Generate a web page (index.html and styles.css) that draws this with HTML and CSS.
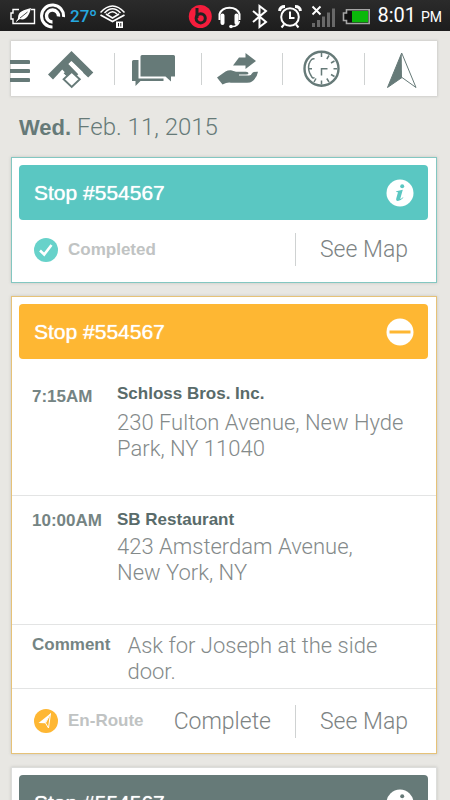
FILE: index.html
```html
<!DOCTYPE html>
<html lang="en">
<head>
<meta charset="utf-8">
<meta name="viewport" content="width=device-width, initial-scale=1">
<title>Stops</title>
<link rel="stylesheet" href="styles.css">
</head>
<body>
<div class="app">
  <div class="status">
    <svg width="26" height="30" viewBox="10 0 26 30" fill="none" stroke="#fff" stroke-width="1.4"><path d="M19 8.500H13V12H11V18H13V22.500H34.500V8.500H31"/><path d="M18 17C18 10 24 9 31 7C29 15 26 20 19.500 18L28 11L17 20Z" fill="#fff" stroke="none"/><path d="M16 20.500L26 12.500" stroke="#fff" stroke-width="1"/><path d="M20 17L27.500 11" stroke="#222" stroke-width=".8"/></svg>
    <svg width="26" height="30" viewBox="40 0 26 30" fill="none" stroke="#fff"><path d="M52.500 26A11 11 0 1 1 63.500 16" stroke-width="3"/><path d="M52.500 21A6 6 0 1 1 58.500 15.500" stroke-width="3.400"/></svg>
    <span class="temp">27º</span>
    <svg width="26" height="30" viewBox="100 0 26 30" fill="none" stroke="#fff" stroke-width="1.500"><path d="M100.500 11.500Q112.500-1.500 124.500 11.500M104.500 12Q112.500 3.500 120.500 12M108 13Q112.500 8.500 117 13"/><path d="M100.500 14L112.500 20.500L124.500 14M106 13L112.500 17L119 13" stroke-width="1.800"/><path d="M116 20.500H123V27H116Z" fill="#fff" stroke="none"/><path d="M118.500 22V25.500M120.800 22V25.500" stroke="#222" stroke-width="1"/></svg>
    <span class="spacer"></span>
    <svg width="26" height="30" viewBox="190 0 26 30"><circle cx="203.300" cy="15.500" r="11.500" fill="#f51d3c"/><path d="M200 7V17" stroke="#222" stroke-width="3"/><circle cx="203.700" cy="17.300" r="4.600" fill="none" stroke="#222" stroke-width="3"/></svg>
    <svg width="26" height="30" viewBox="220 0 26 30" fill="none" stroke="#fff"><path d="M222.500 19V13A10.500 9 0 0 1 242.500 13V19" stroke-width="2"/><path d="M225.500 14.500V22M239.500 14.500V22" stroke-width="4" stroke-linecap="round"/><path d="M242.500 20Q241 26 234 25.500" stroke-width="1.500"/><circle cx="234" cy="25.500" r="1.800" fill="#fff" stroke="none"/></svg>
    <svg width="26" height="30" viewBox="250 0 26 30" fill="none" stroke="#fff" stroke-width="2"><path d="M256 10L269 21L262.500 26V5L269 10L256 21"/></svg>
    <svg width="28" height="30" viewBox="280 0 28 30" fill="none" stroke="#fff" stroke-width="2"><circle cx="293" cy="16" r="8.800"/><path d="M293 10.500V17H297.500M287 23.500L284.500 26.500M299 23.500L301.500 26.500"/><path d="M282.500 10Q283 5.500 288 5.500M298 5.500Q303 5.500 303.500 10" stroke-width="3"/></svg>
    <svg width="28" height="30" viewBox="312 0 28 30"><path d="M315 22h3v4h-3zM320 19h3v7h-3zM325 15.500h3V26h-3zM330 11.500h3V26h-3zM335 7.500h3V26h-3z" fill="#686868"/><path d="M315.500 5.500L323.500 13.500M323.500 5.500L315.500 13.500" stroke="#fff" stroke-width="1.900"/></svg>
    <svg width="30" height="30" viewBox="343 0 30 30"><path d="M348.500 8.800H371.200V22.500H348.500V19.500H345.500V12H348.500Z" fill="#111" stroke="#a5a5a5" stroke-width="1.600"/><path d="M354 10H370V21.300H354Z" fill="#0ab80a"/></svg>
    <span class="time">8:01 <small>PM</small></span>
  </div>

  <nav class="toolbar" aria-label="Main">
    <div class="cell cell-home">
      <button class="menu" aria-label="Menu"><svg width="20" height="40" viewBox="10 48 20 40" fill="#667a78"><path d="M10 59H28.500a1.500 1.500 0 0 1 0 4H10ZM10 68H28.500a1.500 1.500 0 0 1 0 4H10ZM10 77H28.500a1.500 1.500 0 0 1 0 4H10Z"/></svg></button>
      <button aria-label="Home"><svg width="46" height="40" viewBox="48 48 46 40"><path d="M71.500 50L93.300 71.500L88.200 76.500L71 60.500L68.500 63L78.500 73L71.700 80L61 70L53 78.500L48 73.500Z" fill="#667a78"/><path d="M60.500 70.500L63.300 72.500L64.800 71.200L62.200 68.500ZM71.500 60L68.500 63L80 75L83.300 71.500Z" fill="#fff"/><path d="M58 73.500L61.200 70.300L66.500 75.500L63.500 79.500Z" fill="#fff"/><path d="M71.700 70.700L79.800 78.300L71.700 86L63.600 78.300Z" fill="#fff" stroke="#667a78" stroke-width="1.900"/></svg></button>
    </div>
    <button class="cell cell-chat" aria-label="Messages"><svg width="51" height="40" viewBox="132 48 51 40" fill="#667a78"><path d="M142 54H173.500Q175 54 175 55.500V75.500H171V80.500L165.500 75.500H140.500V55.500Q140.500 54 142 54Z"/><path d="M133.500 59H138.500V77.500H163.500V80H140.500L135.500 85V80H132V60.500Q132 59 133.500 59Z"/></svg></button>
    <button class="cell cell-send" aria-label="Deliveries"><svg width="49" height="40" viewBox="217 48 49 40" fill="#667a78"><path d="M239 56.500H245.500V52L256 60L245.500 68V64.500H233Z"/><path d="M217 76.500L225.500 70.500Q228 69 231 69.200L236 70.700H246Q248.500 70.700 248.500 72.300Q248.500 73.500 246 73.500H239V74.500H249Q251 74.500 252.500 71.700Q253.500 70.500 258 70.700Q257 77 252 80.500Q250.500 81.800 247 81.800H231Q227.500 81 222.500 83.500Z"/></svg></button>
    <button class="cell cell-clock" aria-label="Schedule"><svg width="41" height="40" viewBox="303 48 41 40" fill="none" stroke="#667a78"><circle cx="321.500" cy="67.700" r="17" stroke-width="2.400"/><path d="M321.500 52V56M321.500 79.500V83.500M333.500 67.700H337M308.500 67.700H312M329 54.500L326.800 58M334.500 60L331 62M334.500 75.500L331 73.500M329 81L326.800 77.500M314 81L316 77.500M321.500 74.500V67.700H327.500" stroke-width="1.500"/><path d="M314.500 58Q311.500 56.500 309 63Q307.500 69 311 74.500Q312.500 78 314.500 76.500" stroke-width="1.500"/></svg></button>
    <button class="cell cell-nav" aria-label="Navigate"><svg width="33" height="40" viewBox="384 48 33 40"><path d="M401.700 52L402 76.500L387.500 86.500Z" fill="#667a78"/><path d="M401.700 52L416 86.500L402 76.500L387.500 86.500Z" fill="none" stroke="#667a78"/></svg></button>
  </nav>

  <h1 class="date"><strong>Wed.</strong> Feb. 11, 2015</h1>

  <main class="stops">
    <article class="card card-done">
      <header class="bar"><h2>Stop #554567</h2>
        <button aria-label="Details"><svg width="28" height="28" viewBox="0 0 28 28"><circle cx="14" cy="14" r="13.500" fill="#fff"/><circle class="ink" cx="16.200" cy="7.300" r="2"/><path class="ink" d="M10.300 12.300Q13.500 11.500 16.800 10.800L14.300 19.600Q14.200 20.800 17 18.200L17.400 18.800Q14.500 22 11.800 22Q9.600 22 10.300 19.300L12 13.300L10.200 13Z"/></svg></button>
      </header>
      <footer class="actions">
        <span class="state"><svg width="24" height="24" viewBox="0 0 24 24"><circle cx="12" cy="12" r="12" fill="#67d2ca"/><path d="M6 12.500L10.200 16.500L17.500 7" fill="none" stroke="#fff" stroke-width="2.600"/></svg>Completed</span>
        <a class="map" href="#map">See Map</a>
      </footer>
    </article>

    <article class="card card-route">
      <header class="bar"><h2>Stop #554567</h2>
        <button aria-label="Collapse"><svg width="28" height="28" viewBox="0 0 28 28"><circle cx="14" cy="14" r="13.500" fill="#fff"/><path class="ink" d="M3.500 12.500h21v3h-21z"/></svg></button>
      </header>
      <section class="leg leg-first">
        <time>7:15AM</time>
        <div><h3>Schloss Bros. Inc.</h3><p>230 Fulton Avenue, New Hyde Park, NY 11040</p></div>
      </section>
      <section class="leg">
        <time>10:00AM</time>
        <div><h3>SB Restaurant</h3><p>423 Amsterdam Avenue,<br>New York, NY</p></div>
      </section>
      <section class="note"><h3>Comment</h3><p>Ask for Joseph at the side door.</p></section>
      <footer class="actions">
        <span class="state"><svg width="24" height="24" viewBox="0 0 24 24"><circle cx="12" cy="12" r="12" fill="#feb733"/><path d="M16.500 4.500L4.500 14L11 14.200Z" fill="#fff"/><path d="M16.500 4.500L14.500 19L11.500 14Z" fill="none" stroke="#fff"/></svg>En-Route</span>
        <button class="complete">Complete</button>
        <a class="map" href="#map">See Map</a>
      </footer>
    </article>

    <article class="card card-next">
      <header class="bar"><h2>Stop #554567</h2>
        <button aria-label="Details"><svg width="28" height="28" viewBox="0 0 28 28"><circle cx="14" cy="14" r="13.500" fill="#fff"/><circle class="ink" cx="16.200" cy="7.300" r="2"/><path class="ink" d="M10.300 12.300Q13.500 11.500 16.800 10.800L14.300 19.600Q14.200 20.800 17 18.200L17.400 18.800Q14.500 22 11.800 22Q9.600 22 10.300 19.300L12 13.300L10.200 13Z"/></svg></button>
      </header>
    </article>
  </main>
</div>
</body>
</html>
```
FILE: styles.css
```css
* { box-sizing: border-box; }
body, h1, h2, h3, p { margin: 0; }
body { background: #e8e7e3; font-family: Roboto, "Liberation Sans", sans-serif; }
button { padding: 0; border: 0; background: none; font: inherit; color: inherit; display: flex; align-items: center; justify-content: center; }
a { color: inherit; text-decoration: none; }
svg { display: block; flex: none; }

.app { height: 100vh; overflow-y: auto; scrollbar-width: none; }

.status { height: 31px; padding: 0 8px 0 10px; display: flex; align-items: center; gap: 4px; background: linear-gradient(#2b2b2b, #1d1d1d); color: #fff; }
.temp { width: 26px; flex: none; font-size: 17px; font-weight: 500; line-height: 30px; color: #25a9e0; }
.spacer { flex: 1; }
.time { margin-left: 2px; font-size: 20px; line-height: 30px; white-space: nowrap; }
.time small { font-size: 14px; }

.toolbar { height: 55px; margin: 10px 13px 0 11px; display: flex; background: #fff; box-shadow: 0 0 2px 1px #cfcfcc; }
.cell { display: flex; align-items: center; justify-content: center; position: relative; min-width: 0; }
.cell + .cell::before { content: ""; position: absolute; left: 0; top: 12px; height: 32px; border-left: 1px solid #cfd2d2; }
.cell-home { flex: 103; justify-content: flex-start; gap: 18px; }
.cell-home .menu { margin-left: -1px; }
.cell-chat { flex: 87; }
.cell-send { flex: 81; }
.cell-clock { flex: 82; }
.cell-nav { flex: 73; }

.date { padding: 16px 19px 14px; font-size: 24px; line-height: 31px; font-weight: 300; color: #667a78; }
.date strong { font-family: "Liberation Sans", Arial, sans-serif; font-size: 22px; font-weight: 700; }

.stops { display: flex; flex-direction: column; gap: 13px; padding: 0 13px 12px 11px; }
.card { padding-top: 7px; background: #fff; border: 1px solid var(--edge); box-shadow: 0 0 3px #c4c4c0; }
.card-done { --tone: #5ac7c2; --edge: #83c7c1; }
.card-route { --tone: #feb733; --edge: #e6c278; }
.card-next { --tone: #667a78; --edge: #dcdddb; min-height: 126px; }

.bar { height: 55px; margin: 0 8px 0 7px; padding: 0 14px 0 15px; display: flex; align-items: center; justify-content: space-between; border-radius: 4px; background: var(--tone); color: #fff; }
.bar h2 { font-family: "Liberation Sans", Arial, sans-serif; font-size: 21px; line-height: 28px; font-weight: 400; text-shadow: 0 0 1px #fff; }
.ink { fill: var(--tone); }

.actions { min-height: 62px; padding: 0 28px 3px 22px; display: flex; align-items: center; color: #7d8383; font-size: 23px; font-weight: 300; }
.state { display: flex; align-items: center; gap: 10px; margin-right: auto; color: #c0c3c3; font: bold 17px/24px "Liberation Sans", Arial, sans-serif; }
.complete { margin-right: 24px; }
.map { padding-left: 24px; border-left: 1px solid #cfd2d2; line-height: 33px; }

.leg, .note { border-bottom: 1px solid #e3e4e4; padding-left: 20px; display: flex; color: #848a8a; }
.leg { min-height: 129px; padding-top: 14px; }
.leg-first { min-height: 137px; padding-top: 25px; }
.leg time, h3 { font: bold 17px/20px "Liberation Sans", Arial, sans-serif; color: #596b6a; }
.leg time { width: 85px; padding-top: 1px; flex: none; color: #758483; }
.leg-first time { padding-top: 3px; }
.leg p, .note p { font-size: 22px; line-height: 26px; font-weight: 300; }
.leg p { padding-top: 4px; }
.leg-first p { padding-top: 6px; }
.note { min-height: 64px; padding-top: 8px; padding-right: 40px; gap: 17px; }
.note h3 { padding-top: 2px; color: #758483; }
.card-route .actions { min-height: 64px; padding-bottom: 0; }
```
